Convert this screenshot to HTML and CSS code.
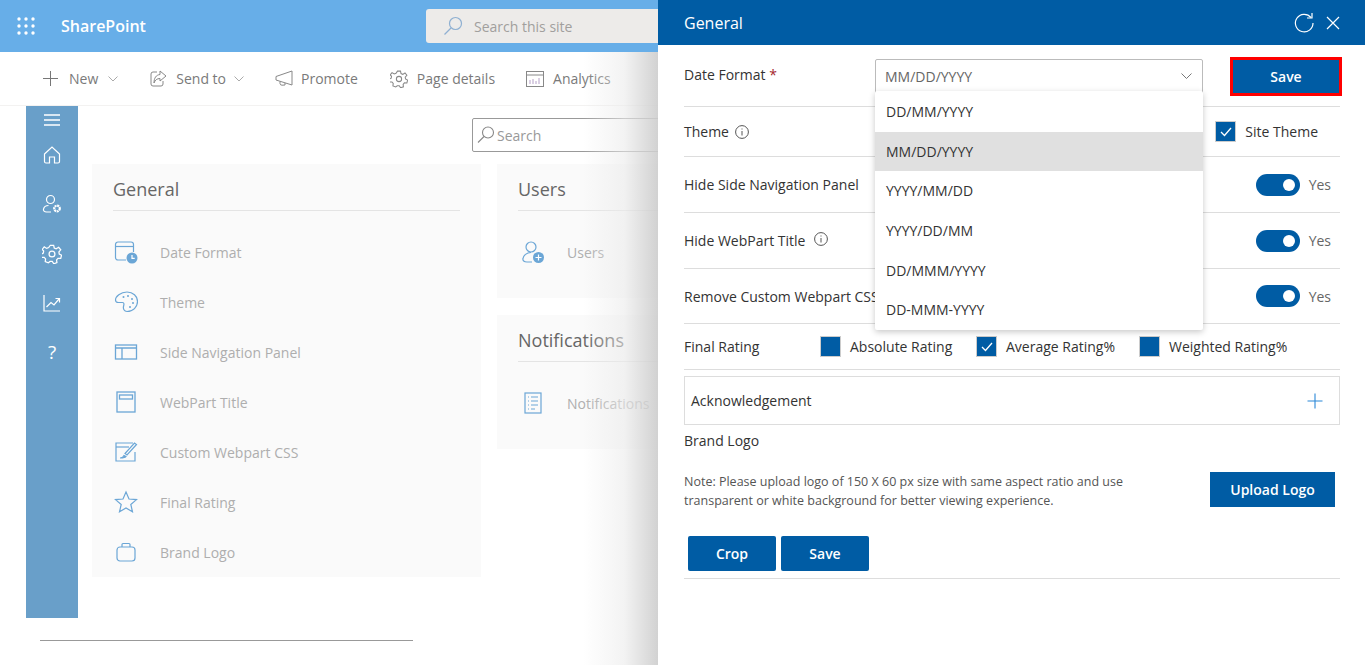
FILE: index.html
```html
<!DOCTYPE html>
<html lang="en">
<head>
    <meta charset="UTF-8">
    <title>General</title>
    <link rel="stylesheet" href="styles.css">
</head>
<body>
    <div class="suitebar">
        <svg class="waffle" width="18" height="18" viewBox="0 0 18 18" fill="#fff">
            <circle cx="2" cy="2" r="1.7"/><circle cx="9" cy="2" r="1.7"/><circle cx="16" cy="2" r="1.7"/>
            <circle cx="2" cy="9" r="1.7"/><circle cx="9" cy="9" r="1.7"/><circle cx="16" cy="9" r="1.7"/>
            <circle cx="2" cy="16" r="1.7"/><circle cx="9" cy="16" r="1.7"/><circle cx="16" cy="16" r="1.7"/>
        </svg>
        <span class="brand">SharePoint</span>
        <div class="site-search">
            <svg width="20" height="20" viewBox="0 0 20 20" fill="none" stroke="#8fb0d2" stroke-width="1.2"><circle cx="12.5" cy="7.5" r="6"/><path d="M8 12 1.5 18.5"/></svg>
            <span>Search this site</span>
        </div>
    </div>

    <div class="cmdbar">
        <div class="cmd cmd-new">
            <svg width="15" height="15" viewBox="0 0 15 15" stroke="#777" fill="none"><path d="M7.5 0v15M0 7.5h15"/></svg>
            <span>New</span>
            <svg class="chev" width="10" height="6" viewBox="0 0 10 6" fill="none" stroke="#aaa"><path d="m.5.5 4.5 4.5L9.500.5"/></svg>
        </div>
        <div class="cmd cmd-send">
            <svg width="17" height="17" viewBox="0 0 17 17" fill="none" stroke="#888"><path d="M7 2H3a2 2 0 0 0-2 2v10a2 2 0 0 0 2 2h8a2 2 0 0 0 2-2v-3"/><path d="M10 1l6 5-6 5V8.500C7 8.500 5 10 4 13c0-5 2-8 6-8.500z"/></svg>
            <span>Send to</span>
            <svg class="chev" width="10" height="6" viewBox="0 0 10 6" fill="none" stroke="#aaa"><path d="m.5.5 4.500 4.500L9.500.5"/></svg>
        </div>
        <div class="cmd cmd-promote">
            <svg width="18" height="17" viewBox="0 0 18 17" fill="none" stroke="#888"><path d="M17 1v14L1 10V6.500z"/><path d="M5 11.500v2a2 2 0 0 0 2 1.700l3-.2V13"/></svg>
            <span>Promote</span>
        </div>
        <div class="cmd cmd-details">
            <svg width="18" height="18" viewBox="0 0 24 24" fill="none" stroke="#888" stroke-width="1.400"><circle cx="12" cy="12" r="3.500"/><path d="M10 1.500h4l.7 3.300 2.300 1 3-1.800 2.500 3-2.200 2.500.4 2.500 2.800 1.500-1 3.800-3.300-.1-1.700 1.900.4 3.300-3.700 1.300-1.900-2.700h-2.600L7.600 22.500l-3.700-1.300.4-3.300-1.700-1.900-3.300.1-.5-3.800 2.800-1.500.4-2.500L.2 6.500 2.700 3.500l3 1.800 2.300-1z"/></svg>
            <span>Page details</span>
        </div>
        <div class="cmd cmd-analytics">
            <svg width="18" height="16" viewBox="0 0 18 16" fill="none" stroke="#888"><rect x=".5" y=".5" width="17" height="15"/><path d="M.5 4h17"/><path stroke="#b5a0c8" d="M4 13V9M7 13V8M10 13V10M13 13V7"/></svg>
            <span>Analytics</span>
        </div>
    </div>

    <div class="workspace">
        <nav class="rail">
            <svg class="rail-menu" width="16" height="12" viewBox="0 0 16 12" stroke="#fff" stroke-width="1.300"><path d="M0 1h16M0 6h16M0 11h16"/></svg>
            <svg class="rail-icon" width="18" height="18" viewBox="0 0 18 18" fill="none" stroke="#fff" stroke-width="1.200"><path d="M1.500 8 9 1l7.500 7v7.500a1.500 1.500 0 0 1-1.500 1.500h-3.500v-6h-5v6H3a1.500 1.500 0 0 1-1.500-1.500z"/></svg>
            <svg class="rail-icon" width="20" height="20" viewBox="0 0 20 20" fill="none" stroke="#fff" stroke-width="1.200"><circle cx="8.500" cy="5.500" r="4"/><path d="M9 18H4.500C2.500 18 1 16.800 1.500 15c.5-2 2.500-3.500 5-3.500"/><circle cx="15" cy="14.500" r="2.800" stroke-width="2.200" stroke-dasharray="2 .6"/></svg>
            <svg class="rail-icon" width="20" height="20" viewBox="0 0 24 24" fill="none" stroke="#fff" stroke-width="1.500"><circle cx="12" cy="12" r="3.500"/><path d="M10 1.500h4l.7 3.300 2.300 1 3-1.800 2.500 3-2.200 2.500.4 2.500 2.800 1.500-1 3.800-3.300-.1-1.700 1.900.4 3.300-3.700 1.300-1.900-2.700h-2.600L7.600 22.500l-3.700-1.300.4-3.300-1.700-1.900-3.300.1-.5-3.800 2.800-1.500.4-2.500L.2 6.500 2.700 3.500l3 1.800 2.300-1z"/></svg>
            <svg class="rail-icon" width="18" height="18" viewBox="0 0 18 18" fill="none" stroke="#fff" stroke-width="1.200"><path d="M1 1v16h16"/><path d="M3.500 13 8 8.500l3 2.500 5-6"/><path d="M12.500 4.500H16.500V8.500"/></svg>
            <span class="rail-help">?</span>
        </nav>

        <main class="main">
            <div class="list-search">
                <svg width="18" height="18" viewBox="0 0 18 18" fill="none" stroke="#888" stroke-width="1.100"><circle cx="11" cy="6.500" r="5.500"/><path d="M7 10.500 1 16.500"/></svg>
                <span>Search</span>
            </div>
            <div class="cards">
                <section class="card card-general">
                    <h2>General</h2>
                    <div class="card-item">
                        <svg width="24" height="24" viewBox="0 0 24 24" fill="none" stroke="#6ba6d6" stroke-width="1.200"><path d="M12 20H4a2.500 2.500 0 0 1-2.500-2.500V4.500A2.500 2.500 0 0 1 4 2h13a2.500 2.500 0 0 1 2.500 2.500V12"/><path d="M1.500 6.500h18"/><circle cx="18" cy="18" r="5.500" fill="#6ba6d6" stroke="none"/><path d="M18 15v3.300h2.700" stroke="#fff"/></svg>
                        <span>Date Format</span>
                    </div>
                    <div class="card-item">
                        <svg width="24" height="24" viewBox="0 0 24 24" fill="none" stroke="#6ba6d6" stroke-width="1.200"><path d="M13 2C6.500 2 1.500 6.500 1.500 10c0 1.500 1 2.500 3 2.500h4c2 0 1.500 2 1 4s.5 5 3.500 5c6 0 10.500-4.500 10.500-10S19 2 13 2z"/><circle cx="9.500" cy="7" r="1" fill="#6ba6d6" stroke="none"/><circle cx="14" cy="6" r="1" fill="#6ba6d6" stroke="none"/><circle cx="18" cy="9" r="1" fill="#6ba6d6" stroke="none"/><circle cx="19" cy="13" r="1" fill="#6ba6d6" stroke="none"/><circle cx="16" cy="17" r="1" fill="#6ba6d6" stroke="none"/></svg>
                        <span>Theme</span>
                    </div>
                    <div class="card-item">
                        <svg width="24" height="24" viewBox="0 0 24 24" fill="none" stroke="#6ba6d6" stroke-width="1.300"><rect x="1.500" y="5" width="21" height="14"/><path d="M1.500 8h21M8 8v11"/></svg>
                        <span>Side Navigation Panel</span>
                    </div>
                    <div class="card-item">
                        <svg width="24" height="24" viewBox="0 0 24 24" fill="none" stroke="#6ba6d6" stroke-width="1.300"><rect x="3" y="2" width="18" height="20"/><rect x="5.500" y="5" width="13" height="4"/></svg>
                        <span>WebPart Title</span>
                    </div>
                    <div class="card-item">
                        <svg width="24" height="24" viewBox="0 0 24 24" fill="none" stroke="#6ba6d6" stroke-width="1.200"><path d="M21 12v9H2V3h17"/><path d="M2 7h13"/><path d="M22.500 4.500 13 15l-2-1.500L20.500 3z"/><path d="M6 18c2 0 3-.5 4-2.500l2 1c-.5 1-2 1.500-6 1.500z" fill="#6ba6d6"/></svg>
                        <span>Custom Webpart CSS</span>
                    </div>
                    <div class="card-item">
                        <svg width="24" height="24" viewBox="0 0 24 24" fill="none" stroke="#6ba6d6" stroke-width="1.200"><path d="m12 2 3 7 7.500.6-5.700 4.900 1.700 7.300L12 18l-6.500 3.800 1.700-7.300L1.500 9.600 9 9z"/></svg>
                        <span>Final Rating</span>
                    </div>
                    <div class="card-item">
                        <svg width="24" height="24" viewBox="0 0 24 24" fill="none" stroke="#6ba6d6" stroke-width="1.200"><rect x="3" y="7" width="18" height="14" rx="3"/><path d="M8 7V4.500A1 1 0 0 1 9 3.500h6a1 1 0 0 1 1 1V7"/></svg>
                        <span>Brand Logo</span>
                    </div>
                </section>
                <div class="card-stack">
                    <section class="card card-users">
                        <h2>Users</h2>
                        <div class="card-item">
                            <svg width="24" height="24" viewBox="0 0 24 24" fill="none" stroke="#6ba6d6" stroke-width="1.200"><circle cx="10" cy="7" r="5"/><path d="M11 22H6c-3 0-4.500-1.500-4-3.500.5-3 3.500-6 8-6"/><circle cx="17.500" cy="17.500" r="5.500" fill="#6ba6d6" stroke="none"/><path d="M17.500 14.500v6M14.500 17.500h6" stroke="#fff"/></svg>
                            <span>Users</span>
                        </div>
                    </section>
                    <section class="card card-notes">
                        <h2>Notifications</h2>
                        <div class="card-item">
                            <svg width="24" height="24" viewBox="0 0 24 24" fill="none" stroke="#6ba6d6" stroke-width="1.200"><rect x="4" y="2" width="16" height="20"/><path d="M7 6h1M10 6h7M7 10h1M10 10h7M7 14h1M10 14h7M7 18h1M10 18h4"/></svg>
                            <span>Notifications</span>
                        </div>
                    </section>
                </div>
            </div>
        </main>
    </div>
    <div class="page-rule"></div>

    <aside class="panel">
        <header class="panel-head">
            <h1>General</h1>
            <div class="panel-tools">
                <svg width="22" height="22" viewBox="0 0 22 22" fill="none" stroke="#fff" stroke-width="1.200"><path d="M18 5.500A8.800 8.800 0 1 0 20 11"/><path d="M19 1v5h-5"/></svg>
                <svg width="14" height="14" viewBox="0 0 14 14" stroke="#fff" stroke-width="1.200"><path d="m1 1 12 12M13 1 1 13"/></svg>
            </div>
        </header>

        <div class="panel-body">
            <div class="row row-date">
                <label class="date-label">Date Format <em>*</em></label>
                <div class="select">
                    <span>MM/DD/YYYY</span>
                    <svg width="11" height="7" viewBox="0 0 11 7" fill="none" stroke="#777"><path d="m.5.500 5 5 5-5"/></svg>
                </div>
                <button class="btn btn-outlined">Save</button>
            </div>
            <div class="row row-theme">
                <label>Theme</label>
                <svg class="info" width="14" height="14" viewBox="0 0 14 14" fill="none" stroke="#555"><circle cx="7" cy="7" r="6.400"/><path d="M7 6v4.500M7 3.500v1"/></svg>
                <div class="check-right">
                    <span class="check"><svg width="12" height="10" viewBox="0 0 12 10" fill="none" stroke="#fff" stroke-width="1.300"><path d="m1 5 3.500 3.500L11 1"/></svg></span>
                    <span>Site Theme</span>
                </div>
            </div>
            <div class="row row-side">
                <label>Hide Side Navigation Panel</label>
                <div class="toggle-wrap"><span class="toggle"></span><span class="yes">Yes</span></div>
            </div>
            <div class="row row-side">
                <label>Hide WebPart Title</label>
                <svg class="info info-up" width="14" height="14" viewBox="0 0 14 14" fill="none" stroke="#555"><circle cx="7" cy="7" r="6.400"/><path d="M7 6v4.500M7 3.500v1"/></svg>
                <div class="toggle-wrap"><span class="toggle"></span><span class="yes">Yes</span></div>
            </div>
            <div class="row row-css">
                <label>Remove Custom Webpart CSS</label>
                <div class="toggle-wrap"><span class="toggle"></span><span class="yes">Yes</span></div>
            </div>
            <div class="row row-rating">
                <label class="rating-label">Final Rating</label>
                <span class="check"></span><span class="rating-text rating-a">Absolute Rating</span>
                <span class="check"><svg width="12" height="10" viewBox="0 0 12 10" fill="none" stroke="#fff" stroke-width="1.300"><path d="m1 5 3.500 3.500L11 1"/></svg></span><span class="rating-text rating-b">Average Rating%</span>
                <span class="check"></span><span class="rating-text">Weighted Rating%</span>
            </div>
            <div class="accordion">
                <span>Acknowledgement</span>
                <svg width="16" height="16" viewBox="0 0 16 16" stroke="#2b88d8" stroke-width="1.100"><path d="M8 .5v15M.5 8h15"/></svg>
            </div>
            <div class="logo-title">Brand Logo</div>
            <div class="logo-row">
                <p class="note">Note: Please upload logo of 150 X 60 px size with same aspect ratio and use transparent or white background for better viewing experience.</p>
                <button class="btn btn-upload">Upload Logo</button>
            </div>
            <div class="crop-row">
                <button class="btn btn-crop">Crop</button>
                <button class="btn btn-crop">Save</button>
            </div>
        </div>

        <ul class="dropdown">
            <li>DD/MM/YYYY</li>
            <li class="selected">MM/DD/YYYY</li>
            <li>YYYY/MM/DD</li>
            <li>YYYY/DD/MM</li>
            <li>DD/MMM/YYYY</li>
            <li>DD-MMM-YYYY</li>
        </ul>
    </aside>
</body>
</html>
```

FILE: styles.css
```css
html, body {
    margin: 0;
    padding: 0;
    height: 100%;
    overflow: hidden;
}

body {
    font-family: "Open Sans", "Noto Sans", sans-serif;
    font-size: 14px;
    background-color: #fff;
    color: #333;
}

/* top bars */
.suitebar {
    display: flex;
    align-items: center;
    height: 52px;
    background-color: #67aee8;
    padding-left: 17px;
}

.brand {
    margin-left: 26px;
    width: 365px;
    color: #fff;
    font-size: 16px;
    font-weight: 600;
}

.site-search {
    display: flex;
    align-items: center;
    gap: 11px;
    width: 400px;
    height: 34px;
    padding-left: 17px;
    background-color: #edebe9;
    border-radius: 3px;
    color: #a19f9d;
}

.cmdbar {
    display: flex;
    align-items: center;
    height: 53px;
    border-bottom: 1px solid #f3f2f1;
    color: #7a7a7a;
}

.cmd {
    display: flex;
    align-items: center;
}

.cmd-new { margin-left: 43px; gap: 11px; }
.cmd-send { margin-left: 32px; gap: 9px; }
.cmd-promote { margin-left: 31px; gap: 8px; }
.cmd-details { margin-left: 32px; gap: 9px; }
.cmd-analytics { margin-left: 31px; gap: 9px; }
.chev { margin-left: -1px; }

/* left rail and cards */
.workspace {
    display: flex;
    margin-left: 26px;
}

.rail {
    display: flex;
    flex-direction: column;
    align-items: center;
    width: 52px;
    height: 512px;
    background-color: #699fc9;
}

.rail-menu { margin-top: 8px; margin-bottom: 20px; }
.rail-icon { margin-bottom: 30px; }
.rail-help { color: #fff; font-size: 19px; line-height: 20px; }

.main {
    flex: 1;
    padding: 12px 0 0 14px;
}

.list-search {
    display: flex;
    align-items: center;
    gap: 2px;
    box-sizing: border-box;
    width: 300px;
    height: 34px;
    margin-left: 380px;
    padding-left: 4px;
    border: 1px solid #999;
    border-radius: 2px;
    color: #999;
}

.cards {
    display: flex;
    gap: 16px;
    margin-top: 12px;
}

.card-stack {
    display: flex;
    flex-direction: column;
    gap: 17px;
}

.card {
    box-sizing: border-box;
    width: 389px;
    background-color: #fafafa;
    padding: 0 21px;
}

.card-general { height: 413px; }
.card-users { height: 134px; }
.card-notes { height: 134px; }

.card h2 {
    margin: 0 0 16px;
    height: 46px;
    line-height: 50px;
    font-size: 18px;
    font-weight: 400;
    color: #666;
    border-bottom: 1px solid #e4e4e4;
}

.card-item {
    display: flex;
    align-items: center;
    gap: 22px;
    height: 50px;
    padding-left: 1px;
    color: #aeaeae;
}

.card-users .card-item,
.card-notes .card-item { padding-left: 3px; margin-top: 0; }

.page-rule {
    width: 373px;
    height: 1px;
    margin: 22px 0 0 40px;
    background-color: #999;
}

/* panel */
.panel {
    position: absolute;
    top: 0;
    right: 0;
    bottom: 0;
    width: 707px;
    background-color: #fff;
}

.panel::before {
    content: "";
    position: absolute;
    top: 52px;
    bottom: 0;
    left: -75px;
    width: 75px;
    background: linear-gradient(to right, rgba(255,255,255,0), rgba(235,235,235,.6) 55%, rgba(205,205,205,.9));
}

.panel-head {
    display: flex;
    align-items: center;
    justify-content: space-between;
    height: 45px;
    padding: 0 25px 0 26px;
    background-color: #005ca4;
    color: #fff;
}

.panel-head h1 {
    margin: 0;
    font-size: 16px;
    font-weight: 400;
}

.panel-tools {
    display: flex;
    align-items: center;
    gap: 11px;
}

.panel-body {
    padding: 0 25px 0 26px;
}

.row {
    display: flex;
    align-items: center;
    box-sizing: border-box;
    border-bottom: 1px solid #ddd;
}

.row label { font-weight: 400; }

.row-date { height: 62px; padding-top: 1px; }
.row-theme { height: 50px; }
.row-side { height: 56px; }
.row-css { height: 55px; }
.row-rating { height: 46px; }

.date-label {
    width: 191px;
    margin-top: -4px;
}

.date-label em {
    color: #a4262c;
    font-style: normal;
}

.select {
    display: flex;
    align-items: center;
    justify-content: space-between;
    box-sizing: border-box;
    width: 328px;
    height: 35px;
    padding: 0 10px 0 9px;
    border: 1px solid #bbb;
    border-radius: 2px;
    color: #666;
}

.btn {
    border: none;
    background-color: #005ca4;
    color: #fff;
    font-family: inherit;
    font-size: 14px;
    font-weight: 600;
}

.btn-outlined {
    box-sizing: border-box;
    width: 112px;
    height: 39px;
    margin-left: 27px;
    margin-right: -2px;
    border: 3px solid #f00;
}

.info { margin-left: 6px; }
.info-up { margin-left: 9px; margin-top: -3px; }

.check-right {
    display: flex;
    align-items: center;
    gap: 9px;
    margin-left: auto;
    margin-right: 22px;
}

.check {
    display: flex;
    align-items: center;
    justify-content: center;
    box-sizing: border-box;
    width: 21px;
    height: 21px;
    background-color: #005ca4;
    border: 1px solid #ccc;
}

.toggle-wrap {
    display: flex;
    align-items: center;
    gap: 9px;
    margin-left: auto;
    margin-right: 9px;
}

.toggle {
    position: relative;
    width: 44px;
    height: 22px;
    border-radius: 11px;
    background-color: #005ca4;
}

.toggle::after {
    content: "";
    position: absolute;
    top: 5px;
    right: 5px;
    width: 12px;
    height: 12px;
    border-radius: 50%;
    background-color: #fff;
}

.yes { color: #666; }

.rating-label { width: 136px; }
.rating-text { margin-left: 9px; }
.rating-a { width: 126px; }
.rating-b { width: 133px; }

.accordion {
    display: flex;
    align-items: center;
    justify-content: space-between;
    box-sizing: border-box;
    height: 49px;
    margin-top: 6px;
    padding: 0 16px 0 6px;
    border: 1px solid #ddd;
}

.logo-title {
    margin-top: 6px;
    line-height: 20px;
}

.logo-row {
    display: flex;
    align-items: flex-start;
    justify-content: space-between;
    margin-top: 21px;
    padding-right: 5px;
}

.note {
    width: 500px;
    margin: 0;
    font-size: 12.500px;
    line-height: 19px;
    color: #555;
}

.btn-upload {
    width: 125px;
    height: 35px;
}

.crop-row {
    display: flex;
    gap: 5px;
    margin-top: 26px;
    padding: 0 0 7px 4px;
    border-bottom: 1px solid #ddd;
}

.btn-crop {
    width: 88px;
    height: 35px;
    border-radius: 2px;
}

/* open dropdown over the form */
.dropdown {
    position: absolute;
    top: 91px;
    left: 217px;
    width: 328px;
    height: 238px;
    margin: 0;
    padding: 1px 0 0;
    list-style: none;
    background-color: #fff;
    border-radius: 2px;
    box-shadow: 0 2px 6px rgba(0,0,0,.22);
}

.dropdown li {
    height: 39.700px;
    line-height: 39px;
    padding-left: 11px;
}

.dropdown .selected {
    background-color: #e0e0e0;
}
```
